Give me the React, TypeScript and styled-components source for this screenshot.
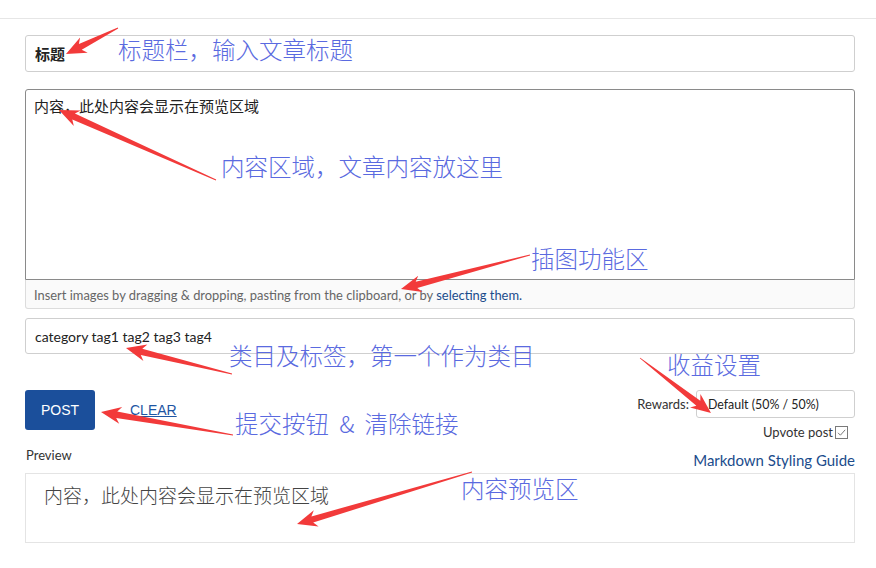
import React from "react";
import styled, { createGlobalStyle } from "styled-components";

const GlobalStyle = createGlobalStyle`
  html, body { margin: 0; padding: 0; background: #ffffff; }
  body { font-family: Lato, "Noto Sans CJK SC", sans-serif; color: #333; }
  * { box-sizing: border-box; }
`;

const UI = `Lato, "Noto Sans CJK SC", sans-serif`;
const CJK = `"Noto Sans CJK SC", sans-serif`;

const Page = styled.div`
  position: relative;
  width: 876px;
  height: 568px;
  overflow: hidden;
`;

const TopBar = styled.div`
  height: 19px;
  border-bottom: 1px solid #e6e6e6;
`;

const Main = styled.div`
  padding: 16px 21px 0 25px;
  display: flex;
  flex-direction: column;
`;

const TextField = styled.div<{ $bold?: boolean; $h: number }>`
  height: ${(p) => p.$h}px;
  border: 1px solid #cfcfcf;
  border-radius: 3px;
  padding: 0 9px;
  display: flex;
  align-items: center;
  font-family: ${(p) => (p.$bold ? CJK : UI)};
  font-size: ${(p) => (p.$bold ? 15 : 14)}px;
  font-weight: ${(p) => (p.$bold ? 700 : 400)};
  color: #222;
`;

const Editor = styled.div`
  margin-top: 17px;
  display: flex;
  flex-direction: column;
`;

const EditorArea = styled.div`
  height: 191px;
  border: 1px solid #8a8a8a;
  border-radius: 3px 3px 0 0;
  padding: 6px 8px;
  font-family: ${CJK};
  font-size: 15px;
  line-height: 20px;
  color: #222;
`;

const EditorFooter = styled.div`
  height: 29px;
  border: 1px solid #dcdcdc;
  border-top: none;
  border-radius: 0 0 3px 3px;
  background: #fafafa;
  padding: 1px 8px 0;
  display: flex;
  align-items: center;
  font-family: ${UI};
  font-size: 12.9px;
  color: #666;
`;

const Link = styled.span`
  color: #1b4c8c;
`;

const Tags = styled(TextField)`
  margin-top: 9px;
`;

const ActionRow = styled.div`
  margin-top: 36px;
  display: flex;
  justify-content: space-between;
  align-items: flex-start;
`;

const LeftActions = styled.div`
  display: flex;
  align-items: center;
  gap: 35px;
`;

const PostButton = styled.button`
  width: 70px;
  height: 40px;
  border: none;
  border-radius: 3px;
  background: #1b4f9b;
  color: #fff;
  font-family: "Liberation Sans", Arial, sans-serif;
  font-size: 14px;
  padding: 0;
`;

const ClearLink = styled.span`
  font-family: "Liberation Sans", Arial, sans-serif;
  font-size: 14px;
  color: #1d55a3;
  text-decoration: underline;
  margin-bottom: 1px;
`;

const RightActions = styled.div`
  display: flex;
  flex-direction: column;
  align-items: flex-end;
`;

const RewardsRow = styled.div`
  display: flex;
  align-items: center;
  gap: 7px;
  font-family: ${UI};
  font-size: 13px;
  color: #333;
`;

const Select = styled.div`
  width: 159px;
  height: 28px;
  border: 1px solid #cfcfcf;
  border-radius: 3px;
  padding: 0 11px;
  display: flex;
  align-items: center;
  font-family: ${UI};
  font-size: 12.4px;
  color: #222;
`;

const UpvoteRow = styled.div`
  margin-top: 5px;
  margin-right: 7px;
  display: flex;
  align-items: center;
  gap: 2px;
  font-family: ${UI};
  font-size: 13px;
  line-height: 18px;
  color: #333;
`;

const PreviewHead = styled.div`
  margin-top: 5px;
  display: flex;
  justify-content: space-between;
  align-items: flex-start;
  font-family: ${UI};
`;

const PreviewLabel = styled.div`
  font-size: 13px;
  line-height: 20px;
  color: #333;
  margin-left: 1px;
  margin-top: -1px;
`;

const GuideLink = styled.div`
  margin-top: 4px;
  font-size: 15px;
  line-height: 20px;
  color: #1b4c8c;
`;

const PreviewBox = styled.div`
  margin-top: 3px;
  height: 70px;
  border: 1px solid #e4e4e4;
  padding: 9px 18px;
  font-family: ${CJK};
  font-size: 19px;
  line-height: 24px;
  color: #444;
  font-weight: 300;
`;

const Overlay = styled.div`
  position: absolute;
  inset: 0;
  pointer-events: none;
`;

const Note = styled.div<{ $x: number; $y: number }>`
  position: absolute;
  left: ${(p) => p.$x}px;
  top: ${(p) => p.$y}px;
  font-family: ${CJK};
  font-size: 23.5px;
  line-height: 30px;
  color: #5a6ae0;
  font-weight: 300;
  white-space: nowrap;
  word-spacing: 5px;
`;

const ArrowLayer = styled.svg`
  position: absolute;
  inset: 0;
`;

type Pt = [number, number];

function arrowPoints(tail: Pt, tip: Pt): string {
  const dx = tip[0] - tail[0];
  const dy = tip[1] - tail[1];
  const len = Math.hypot(dx, dy);
  const ux = dx / len;
  const uy = dy / len;
  const nx = -uy;
  const ny = ux;
  const H = 20;
  const W = 8.5;
  const w = 3.2;
  const back = 4;
  const bx = tip[0] - ux * H;
  const by = tip[1] - uy * H;
  const ix = bx + ux * back;
  const iy = by + uy * back;
  const pts: Pt[] = [
    [tail[0] + nx * 0.4, tail[1] + ny * 0.4],
    [ix + nx * w, iy + ny * w],
    [bx + nx * W, by + ny * W],
    tip,
    [bx - nx * W, by - ny * W],
    [ix - nx * w, iy - ny * w],
    [tail[0] - nx * 0.4, tail[1] - ny * 0.4],
  ];
  return pts.map((p) => `${p[0].toFixed(1)},${p[1].toFixed(1)}`).join(" ");
}

const arrows: [Pt, Pt][] = [
  [[118, 28], [66, 54]],
  [[216, 180], [59, 110]],
  [[530, 255], [401, 289]],
  [[232, 374], [126, 348]],
  [[233, 435], [101, 412]],
  [[640, 358], [711, 413]],
  [[472, 472], [297, 524]],
];

const notes: { x: number; y: number; t: string }[] = [
  { x: 118, y: 34, t: "标题栏，输入文章标题" },
  { x: 221, y: 151, t: "内容区域，文章内容放这里" },
  { x: 531, y: 243, t: "插图功能区" },
  { x: 229, y: 340, t: "类目及标签，第一个作为类目" },
  { x: 667, y: 349, t: "收益设置" },
  { x: 235, y: 408, t: "提交按钮 & 清除链接" },
  { x: 461, y: 473, t: "内容预览区" },
];

function CheckBox() {
  return (
    <svg width="13" height="13" viewBox="0 0 13 13">
      <rect x="0.5" y="0.5" width="12" height="12" fill="#fff" stroke="#7a7a7a" />
      <path d="M3 6.8 L5.4 9.2 L10.2 3.8" fill="none" stroke="#7a7a7a" strokeWidth="1" />
    </svg>
  );
}

export default function App() {
  return (
    <Page>
      <GlobalStyle />
      <TopBar />
      <Main>
        <TextField $bold $h={37}>标题</TextField>
        <Editor>
          <EditorArea>内容，此处内容会显示在预览区域</EditorArea>
          <EditorFooter>
            Insert images by dragging &amp; dropping, pasting from the clipboard, or by&nbsp;
            <Link>selecting them.</Link>
          </EditorFooter>
        </Editor>
        <Tags $h={36}>category tag1 tag2 tag3 tag4</Tags>
        <ActionRow>
          <LeftActions>
            <PostButton>POST</PostButton>
            <ClearLink>CLEAR</ClearLink>
          </LeftActions>
          <RightActions>
            <RewardsRow>
              Rewards:
              <Select>Default (50% / 50%)</Select>
            </RewardsRow>
            <UpvoteRow>
              Upvote post
              <CheckBox />
            </UpvoteRow>
          </RightActions>
        </ActionRow>
        <PreviewHead>
          <PreviewLabel>Preview</PreviewLabel>
          <GuideLink>Markdown Styling Guide</GuideLink>
        </PreviewHead>
        <PreviewBox>内容，此处内容会显示在预览区域</PreviewBox>
      </Main>
      <Overlay>
        {notes.map((n) => (
          <Note key={n.t} $x={n.x} $y={n.y}>
            {n.t}
          </Note>
        ))}
        <ArrowLayer width="876" height="568" viewBox="0 0 876 568">
          {arrows.map((a, i) => (
            <polygon key={i} points={arrowPoints(a[0], a[1])} fill="#f23a3a" />
          ))}
        </ArrowLayer>
      </Overlay>
    </Page>
  );
}
